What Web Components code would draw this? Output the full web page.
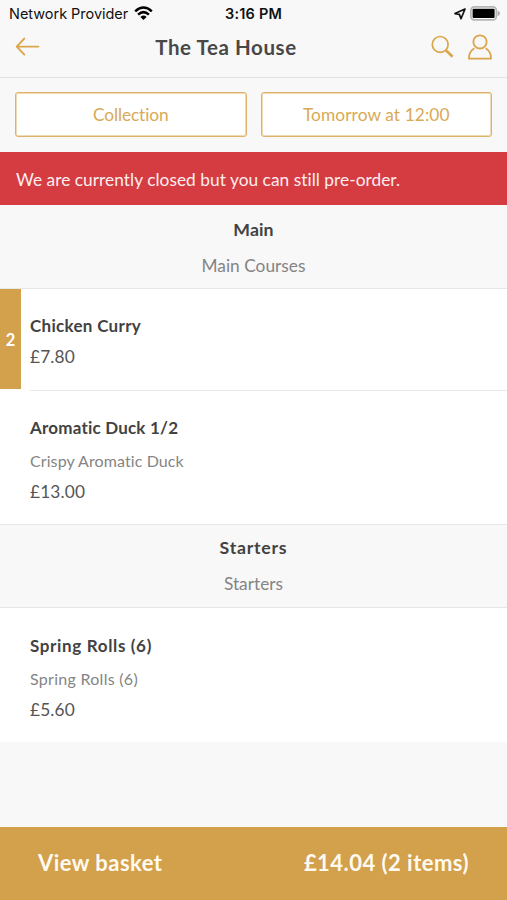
<!DOCTYPE html>
<html lang="en">
<head>
<meta charset="utf-8">
<title>The Tea House</title>
<style>
html, body { margin: 0; }
body { background: #f8f8f8; }
</style>
</head>
<body>
<tea-app></tea-app>
<script>
function define(name, html) {
  const tpl = document.createElement('template');
  tpl.innerHTML = html;
  customElements.define(name, class extends HTMLElement {
    constructor() {
      super();
      this.attachShadow({ mode: 'open' }).append(tpl.content.cloneNode(true));
    }
  });
}

define('status-bar', `
<style>
:host { display: grid; grid-template-columns: 1fr auto 1fr; align-items: center; height: 27px; padding: 0 7px 0 9px;
  box-sizing: border-box; font: 14.5px/20px Inter, sans-serif; color: #111; white-space: nowrap; }
.left { display: flex; align-items: center; gap: 6px; letter-spacing: -.03px; }
.left svg { margin-bottom: 2px; }
.time { font-weight: 600; letter-spacing: .2px; margin-right: 2px; }
.right { display: flex; justify-content: flex-end; align-items: center; gap: 4px; }
svg { display: block; }
</style>
<div class="left"><span>Network Provider</span>
<svg width="19" height="14" viewBox="0 0 19 14"><g fill="none" stroke="#000" stroke-width="2.5"><path d="M1.2 5.3Q9.5-2.3 17.8 5.3"/><path d="M4.1 8.6Q9.5 3.6 14.9 8.6"/></g><path d="M9.5 14L6.4 10.9Q9.5 8.3 12.6 10.9Z"/></svg></div>
<span class="time">3:16 PM</span>
<div class="right">
<svg width="12" height="12" viewBox="0 0 12 12"><path d="M11 1L1 5.6L5.4 6.4L7 10.8Z" fill="none" stroke="#111" stroke-width="1.7" stroke-linejoin="round"/></svg>
<svg width="30" height="15" viewBox="0 0 30 15"><rect x=".9" y=".9" width="25.4" height="13" rx="3.4" fill="#fff" stroke="#b5b5b5" stroke-width="1.7"/><rect x="2.6" y="2.8" width="22" height="9.2" rx="1"/><path d="M27.6 4.6Q30 5.8 30 7.4T27.6 10.2Z" fill="#aaa"/></svg>
</div>`);

define('nav-bar', `
<style>
:host { display: grid; grid-template-columns: 26px 1fr auto; align-items: center; height: 51px; padding: 0 15px 10px 15px;
  box-sizing: border-box; border-bottom: 1px solid #e4e4e4; }
h1 { margin: 0; padding: 0 20px 0 0; text-align: center; font-size: 20.5px; line-height: 24px; font-weight: 700; letter-spacing: .58px; color: #484848; }
.icons { display: flex; justify-content: flex-end; gap: 14px; align-items: center; }
svg { display: block; fill: none; stroke: var(--gold-line); }
</style>
<svg width="26" height="20" viewBox="0 0 26 20" stroke-width="1.9" stroke-linecap="round" stroke-linejoin="round"><path d="M23.4 9.6H1.7M9.3 1.6L1.7 9.6L9.3 17.6"/></svg>
<h1><slot></slot></h1>
<div class="icons">
<svg width="23" height="24" viewBox="0 0 23 24" stroke-width="1.7"><circle cx="9.2" cy="9.4" r="7.9"/><path d="M14.9 15.2L21.6 21.8" stroke-width="2.6"/></svg>
<svg width="24" height="26" viewBox="0 0 24 26" stroke-width="1.8" stroke-linejoin="round"><circle cx="12" cy="7.9" r="6.6"/><path d="M6.4 14.3Q1 17.3.9 24.6H23.1Q23 17.3 17.6 14.3"/></svg>
</div>`);

define('choice-bar', `
<style>
:host { display: grid; grid-template-columns: 1fr 1fr; gap: 14px; padding: 14px 15px 15px; }
</style>
<slot></slot>`);

define('choice-button', `
<style>
:host { display: flex; justify-content: center; align-items: center; height: 45px; box-sizing: border-box;
  border: 1px solid var(--gold-border); box-shadow: inset 0 0 0 1px #efdab5; border-radius: 3px; background: #fff;
  color: #d9a955; font-size: 17.3px; letter-spacing: var(--ls, .1px); }
</style>
<slot></slot>`);

define('notice-banner', `
<style>
:host { display: flex; align-items: center; height: 53px; padding: 1px 16px 0; box-sizing: border-box;
  background: #d43c42; color: #fdeeee; font-size: 17.3px; letter-spacing: .04px; white-space: nowrap; }
</style>
<slot></slot>`);

define('menu-section', `
<style>
:host { display: block; }
header { display: grid; gap: 12px; justify-items: center; align-content: start; height: 84px; padding-top: 12.5px;
  box-sizing: border-box; border-bottom: 1px solid #e6e6e6; line-height: 24px; }
:host([ruled]) header { padding-top: 11px; border-top: 1px solid #e6e6e6; }
.title { font-size: 17.7px; font-weight: 700; color: #424242; letter-spacing: var(--title-ls, .1px); }
.sub { font-size: 17.3px; color: #848484; letter-spacing: .02px; }
.items { background: #fff; }
</style>
<header><div class="title"><slot name="title"></slot></div><div class="sub"><slot name="sub"></slot></div></header>
<div class="items"><slot></slot></div>`);

define('menu-item', `
<style>
:host { display: flex; height: var(--height, 133px); box-sizing: border-box; padding-left: 30px; }
:host([count]) { height: 102px; padding-left: 0; }
.body { flex: 1; padding-top: var(--top, 25px); line-height: 24px; }
:host([count]) .body { margin-left: 9px; border-bottom: 1px solid #e8e8e8; }
.badge { display: none; }
:host([count]) .badge { display: flex; align-items: center; justify-content: center; width: 21px; height: 100px; padding-top: 1px;
  box-sizing: border-box; background: var(--gold); color: #fff; font-size: 16.5px; font-weight: 700; }
.name { font-size: 17px; font-weight: 700; color: #424242; letter-spacing: var(--name-ls, .2px); }
.desc { font-size: 16px; color: #858585; letter-spacing: var(--desc-ls, .1px); margin-top: 9px; }
:host([count]) .desc { display: none; }
.price { font-size: 17.3px; color: #555; letter-spacing: .15px; margin-top: 7px; }
</style>
<div class="badge"><slot name="count"></slot></div>
<div class="body"><div class="name"><slot name="name"></slot></div><div class="desc"><slot name="desc"></slot></div><div class="price"><slot name="price"></slot></div></div>`);

define('basket-bar', `
<style>
:host { display: flex; justify-content: space-between; align-items: center; height: 73px; padding: 0 38px 3px; box-sizing: border-box;
  margin-top: auto; background: var(--gold); color: #fffaf0; font-size: 22px; font-weight: 700; letter-spacing: .47px; white-space: nowrap; }
</style>
<slot></slot>`);

define('tea-app', `
<style>
:host { --gold: #d3a04b; --gold-line: #dba64b; --gold-border: #deb269; display: flex; flex-direction: column; height: 900px;
  overflow: hidden; background: #f8f8f8; font-family: Lato, sans-serif; font-variant-ligatures: none; }
</style>
<status-bar></status-bar>
<nav-bar>The Tea House</nav-bar>
<choice-bar><choice-button style="--ls:-.1px">Collection</choice-button><choice-button>Tomorrow at 12:00</choice-button></choice-bar>
<notice-banner>We are currently closed but you can still pre-order.</notice-banner>
<menu-section>
<span slot="title">Main</span><span slot="sub">Main Courses</span>
<menu-item count style="--name-ls:.3px"><span slot="count">2</span><span slot="name">Chicken Curry</span><span slot="price">£7.80</span></menu-item>
<menu-item><span slot="name">Aromatic Duck 1/2</span><span slot="desc">Crispy Aromatic Duck</span><span slot="price">£13.00</span></menu-item>
</menu-section>
<menu-section ruled style="--title-ls:.75px">
<span slot="title">Starters</span><span slot="sub">Starters</span>
<menu-item style="--height:134px;--top:26px;--name-ls:.65px;--desc-ls:.28px"><span slot="name">Spring Rolls (6)</span><span slot="desc">Spring Rolls (6)</span><span slot="price">£5.60</span></menu-item>
</menu-section>
<basket-bar><span>View basket</span><span>£14.04 (2 items)</span></basket-bar>`);
</script>
</body>
</html>
